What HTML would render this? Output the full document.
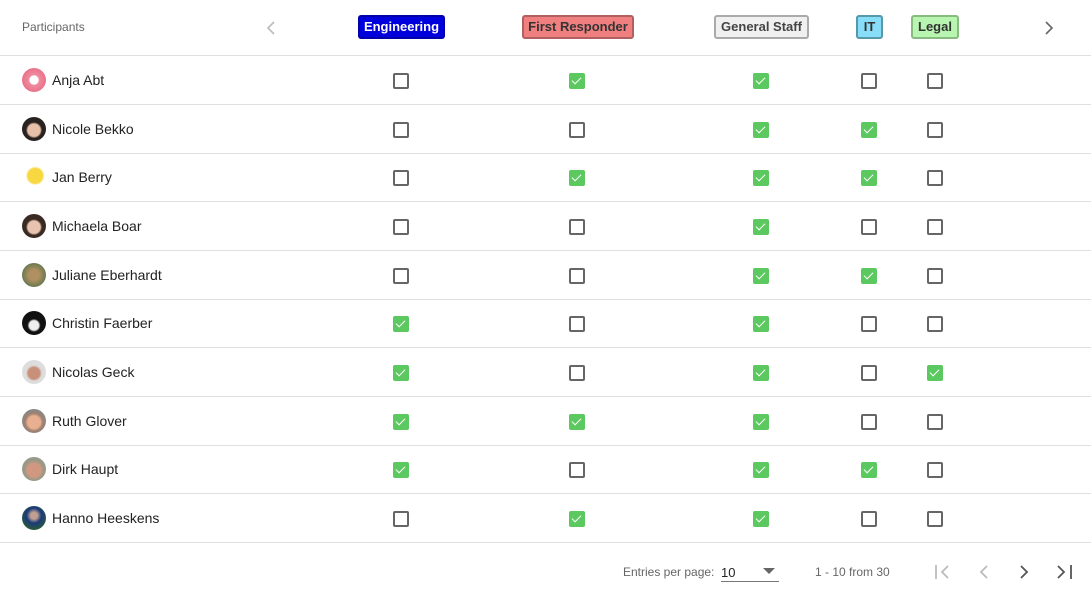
<!DOCTYPE html>
<html><head><meta charset="utf-8"><style>
*{box-sizing:border-box;margin:0;padding:0}
body{width:1091px;height:600px;background:#fff;font-family:"Liberation Sans",Roboto,sans-serif;position:relative;overflow:hidden;color:#222}
.hdr{position:absolute;left:0;top:0;width:1091px;height:56px;border-bottom:1px solid #e0e0e0}
.lbl{position:absolute;left:22px;top:20px;font-size:12px;color:#666}
.badge{position:absolute;top:15px;height:24px;border-radius:3px;border:2px solid;font-size:13px;font-weight:bold;line-height:20px;text-align:center}
.row{position:absolute;left:0;width:1091px;height:49px;border-bottom:1px solid #e0e0e0}
.av{position:absolute;left:22px;top:12px;width:24px;height:24px;border-radius:50%}
.nm{position:absolute;left:52px;top:16px;font-size:14px;color:#222}
.cb{position:absolute;top:17px;width:16px;height:16px;border:2px solid #666;border-radius:2px;margin-left:-8px}
.cb.on{border:none;background:#5cc860}
.cb.on::after{content:"";position:absolute;left:5px;top:2px;width:4px;height:8px;border:solid #fff;border-width:0 1.6px 1.6px 0;transform:rotate(45deg)}
.ft{position:absolute;top:565px;font-size:12px;color:#666}
</style></head><body>
<div class="hdr">
<div class="lbl">Participants</div>
<svg style="position:absolute;left:265px;top:20px" width="12" height="16"><path d="M9 2L3 8l6 6" stroke="#bbb" stroke-width="1.6" fill="none"/></svg>
<div class="badge" style="left:358px;width:87px;background:#0000dd;border-color:#0000aa;color:#fff">Engineering</div>
<div class="badge" style="left:522px;width:112px;background:#f08080;border-color:#b06060;color:#333">First Responder</div>
<div class="badge" style="left:714px;width:95px;background:#f0f0f0;border-color:#aaa;color:#444">General Staff</div>
<div class="badge" style="left:856px;width:27px;background:#88ddf8;border-color:#5599aa;color:#333">IT</div>
<div class="badge" style="left:911px;width:48px;background:#b8f5b0;border-color:#88bb80;color:#333">Legal</div>
<svg style="position:absolute;left:1043px;top:20px" width="12" height="16"><path d="M3 2l6 6-6 6" stroke="#666" stroke-width="1.6" fill="none"/></svg>
</div>

<div class="row" style="top:56px"><div class="av" style="background:radial-gradient(circle,#fff 25%,#f08ca0 30%,#e9728a 70%,#f5eaea 72%)"></div><div class="nm">Anja Abt</div><div class="cb" style="left:401px"></div><div class="cb on" style="left:577px"></div><div class="cb on" style="left:761px"></div><div class="cb" style="left:869px"></div><div class="cb" style="left:935px"></div></div>
<div class="row" style="top:105px"><div class="av" style="background:radial-gradient(circle at 50% 55%,#e8c0a8 35%,#2a2220 45%)"></div><div class="nm">Nicole Bekko</div><div class="cb" style="left:401px"></div><div class="cb" style="left:577px"></div><div class="cb on" style="left:761px"></div><div class="cb on" style="left:869px"></div><div class="cb" style="left:935px"></div></div>
<div class="row" style="top:153px"><div class="av" style="background:radial-gradient(circle at 55% 45%,#f8d840 40%,#fff 50%)"></div><div class="nm">Jan Berry</div><div class="cb" style="left:401px"></div><div class="cb on" style="left:577px"></div><div class="cb on" style="left:761px"></div><div class="cb on" style="left:869px"></div><div class="cb" style="left:935px"></div></div>
<div class="row" style="top:202px"><div class="av" style="background:radial-gradient(circle at 50% 55%,#e8c4b0 35%,#3a2a24 45%)"></div><div class="nm">Michaela Boar</div><div class="cb" style="left:401px"></div><div class="cb" style="left:577px"></div><div class="cb on" style="left:761px"></div><div class="cb" style="left:869px"></div><div class="cb" style="left:935px"></div></div>
<div class="row" style="top:251px"><div class="av" style="background:radial-gradient(circle,#b09060 30%,#6a7a50 70%)"></div><div class="nm">Juliane Eberhardt</div><div class="cb" style="left:401px"></div><div class="cb" style="left:577px"></div><div class="cb on" style="left:761px"></div><div class="cb on" style="left:869px"></div><div class="cb" style="left:935px"></div></div>
<div class="row" style="top:299px"><div class="av" style="background:radial-gradient(circle at 50% 60%,#eee 25%,#111 35%)"></div><div class="nm">Christin Faerber</div><div class="cb on" style="left:401px"></div><div class="cb" style="left:577px"></div><div class="cb on" style="left:761px"></div><div class="cb" style="left:869px"></div><div class="cb" style="left:935px"></div></div>
<div class="row" style="top:348px"><div class="av" style="background:radial-gradient(circle at 50% 55%,#c89078 32%,#ddd 45%)"></div><div class="nm">Nicolas Geck</div><div class="cb on" style="left:401px"></div><div class="cb" style="left:577px"></div><div class="cb on" style="left:761px"></div><div class="cb" style="left:869px"></div><div class="cb on" style="left:935px"></div></div>
<div class="row" style="top:397px"><div class="av" style="background:radial-gradient(circle at 50% 55%,#e8b090 35%,#a08070 50%,#888 70%)"></div><div class="nm">Ruth Glover</div><div class="cb on" style="left:401px"></div><div class="cb on" style="left:577px"></div><div class="cb on" style="left:761px"></div><div class="cb" style="left:869px"></div><div class="cb" style="left:935px"></div></div>
<div class="row" style="top:445px"><div class="av" style="background:radial-gradient(circle at 50% 55%,#d09880 38%,#998 55%)"></div><div class="nm">Dirk Haupt</div><div class="cb on" style="left:401px"></div><div class="cb" style="left:577px"></div><div class="cb on" style="left:761px"></div><div class="cb on" style="left:869px"></div><div class="cb" style="left:935px"></div></div>
<div class="row" style="top:494px"><div class="av" style="background:radial-gradient(circle at 50% 40%,#c0a090 18%,#1a3a7a 40%,#2a5a3a 75%)"></div><div class="nm">Hanno Heeskens</div><div class="cb" style="left:401px"></div><div class="cb on" style="left:577px"></div><div class="cb on" style="left:761px"></div><div class="cb" style="left:869px"></div><div class="cb" style="left:935px"></div></div>

<div class="ft" style="left:623px">Entries per page:</div>
<div style="position:absolute;left:721px;top:558px;width:58px;height:24px;border-bottom:1px solid #777;font-size:13px;color:#222;padding-top:7px">10</div>
<svg style="position:absolute;left:763px;top:568px" width="12" height="6"><path d="M0 0h12L6 6z" fill="#666"/></svg>
<div class="ft" style="left:815px">1 - 10 from 30</div>
<svg style="position:absolute;left:934px;top:564px" width="18" height="16"><path d="M2 1v14M14 2L8 8l6 6" stroke="#bbb" stroke-width="1.8" fill="none"/></svg>
<svg style="position:absolute;left:978px;top:564px" width="12" height="16"><path d="M9 2L3 8l6 6" stroke="#bbb" stroke-width="1.8" fill="none"/></svg>
<svg style="position:absolute;left:1018px;top:564px" width="12" height="16"><path d="M3 2l6 6-6 6" stroke="#555" stroke-width="1.8" fill="none"/></svg>
<svg style="position:absolute;left:1056px;top:564px" width="18" height="16"><path d="M2 2l6 6-6 6M15 1v14" stroke="#555" stroke-width="1.8" fill="none"/></svg>
</body></html>
